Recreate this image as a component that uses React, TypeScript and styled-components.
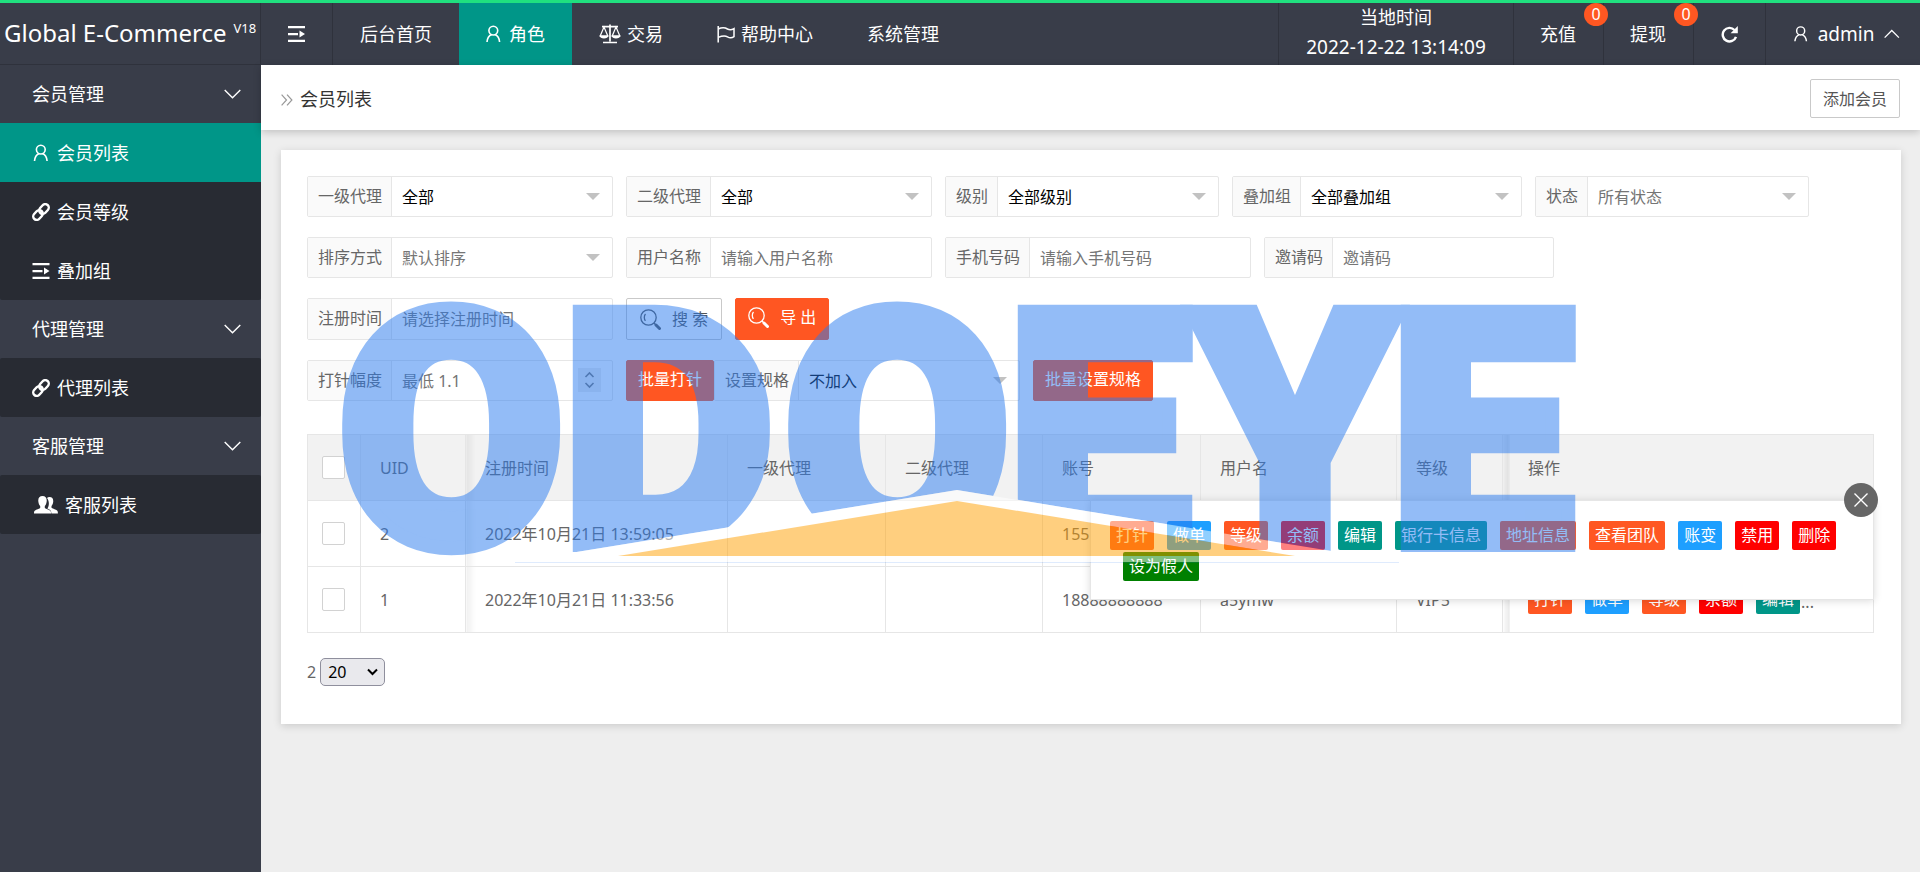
import React from 'react';
import styled, { createGlobalStyle, css } from 'styled-components';

const GlobalStyle = createGlobalStyle`
  *, *::before, *::after { box-sizing: border-box; }
  body {
    margin: 0;
    background: #eee;
    color: #666;
    font-family: "Noto Sans", "Noto Sans CJK SC", sans-serif;
    font-size: 16px;
    line-height: 24px;
  }
  button, input, select { font: inherit; color: inherit; margin: 0; }
  a { color: inherit; text-decoration: none; }
  ul { list-style: none; margin: 0; padding: 0; }
`;

const Page = styled.div`
  display: flex;
  flex-direction: column;
  min-height: 100vh;
`;

const Header = styled.header`
  display: flex;
  height: 65px;
  border-top: 3px solid #20e07f;
  background: #393d49;
  color: #fff;
  font-size: 18px;
`;

const Brand = styled.div`
  display: flex;
  flex: none;
  width: 261px;
  padding: 12px 0 0 4px;
  gap: 7px;
  border-right: 1px solid #2f323c;
  border-bottom: 1px solid #2f323c;
  font-size: 24px;
  line-height: 36px;
  white-space: nowrap;
  sup { font-size: 13px; line-height: 26px; vertical-align: top; }
`;

const IconButton = styled.button`
  display: flex;
  align-items: center;
  justify-content: center;
  width: 72px;
  padding: 0;
  border: 0;
  border-right: 1px solid #2f323c;
  background: none;
  color: #fff;
`;

const NavBar = styled.nav`
  display: flex;
  flex: 1;
`;

const NavLink = styled.a<{ $active?: boolean; $gap?: number }>`
  display: flex;
  align-items: center;
  gap: ${p => p.$gap ?? 8}px;
  padding: 0 27px;
  white-space: nowrap;
  background: ${p => (p.$active ? '#009688' : 'none')};
`;

const Clock = styled.div`
  width: 236px;
  border-left: 1px solid #2f323c;
  border-right: 1px solid #2f323c;
  text-align: center;
  line-height: 28px;
  time { display: block; font-size: 19px; line-height: 32px; }
`;

const MoneyLink = styled.a`
  position: relative;
  display: flex;
  align-items: center;
  padding: 0 27px 0 26px;
  border-right: 1px solid #2f323c;
`;

const Badge = styled.span`
  position: absolute;
  top: 0;
  right: -5px;
  z-index: 1;
  width: 24px;
  height: 23px;
  border-radius: 50%;
  background: #ff5722;
  font-size: 16px;
  line-height: 23px;
  text-align: center;
`;

const UserButton = styled.button`
  display: flex;
  align-items: center;
  gap: 10px;
  width: 154px;
  padding: 0 20px 0 28px;
  border: 0;
  background: none;
  color: #fff;
  font-size: 19px;
`;

const Body = styled.div`
  display: flex;
  flex: 1;
`;

const Sidebar = styled.aside`
  flex: none;
  width: 261px;
  background: #393d49;
  color: #fff;
  font-size: 18px;
`;

const GroupTitle = styled.button`
  display: flex;
  align-items: center;
  justify-content: space-between;
  width: 100%;
  height: 58px;
  padding: 0 20px 0 32px;
  border: 0;
  background: none;
  color: #fff;
`;

const SubMenu = styled.ul`
  border-radius: 2px;
  background: #282b33;
`;

const SubLink = styled.a<{ $active?: boolean }>`
  display: flex;
  align-items: center;
  gap: 7px;
  height: 59px;
  padding: 0 32px;
  background: ${p => (p.$active ? '#009688' : 'none')};
  svg { min-width: 18px; }
`;

const Main = styled.main`
  flex: 1;
  min-width: 0;
`;

const TitleBar = styled.div`
  display: flex;
  align-items: center;
  justify-content: space-between;
  height: 65px;
  padding: 2px 20px 0;
  background: #fff;
  box-shadow: 0 2px 8px rgba(0, 0, 0, 0.2);
`;

const Title = styled.h1`
  display: flex;
  align-items: center;
  gap: 7px;
  margin: 0;
  color: #333;
  font-size: 18px;
  font-weight: 400;
  svg { margin-top: 2px; }
`;

const Button = styled.button<{ $primary?: boolean; $pad?: number; $height?: number }>`
  display: flex;
  align-items: center;
  gap: 11px;
  height: ${p => p.$height ?? 41}px;
  padding: 0 ${p => p.$pad ?? 12}px;
  border: 1px solid #c9c9c9;
  border-radius: 2px;
  background: #fff;
  color: #555;
  white-space: nowrap;
  ${p => p.$primary && css`
    border-color: #ff5722;
    background: #ff5722;
    color: #fff;
    padding-bottom: 4px;
  `}
`;

const Card = styled.section`
  margin: 20px 19px 0 20px;
  padding: 26px 27px 38px 26px;
  background: #fff;
  box-shadow: 0 2px 8px rgba(0, 0, 0, 0.15);
`;

const Filters = styled.form`
  display: flex;
  flex-direction: column;
  gap: 20px;
  margin-bottom: 33px;
`;

const FilterRow = styled.div`
  display: flex;
  gap: 13px;
`;

const Pair = styled.div`
  display: flex;
`;

const Field = styled.label`
  display: flex;
  min-height: 41px;
  border: 1px solid #e6e6e6;
  border-radius: 2px;
  background: #fff;
`;

const FieldLabel = styled.span`
  padding: 0 9px 0 10px;
  border-right: 1px solid #e6e6e6;
  background: #fafafa;
  line-height: 39px;
  white-space: nowrap;
`;

const control = css`
  width: 220px;
  height: 39px;
  padding: 0 10px;
  border: 0;
  background: transparent;
  outline: none;
  appearance: none;
`;

const SelectBox = styled.span`
  position: relative;
  display: flex;
  > svg { position: absolute; right: 12px; top: 16px; pointer-events: none; }
`;

const Select = styled.select<{ $muted?: boolean }>`
  ${control}
  color: ${p => (p.$muted ? '#757575' : '#000')};
`;

const Input = styled.input`
  ${control}
  &::placeholder { color: #757575; opacity: 1; }
  &::-webkit-inner-spin-button { display: none; }
`;

const Spinner = styled.span`
  position: absolute;
  right: 11px;
  top: 7px;
  display: flex;
  align-items: center;
  justify-content: center;
  width: 23px;
  height: 24px;
  background: #ededed;
`;

const TableWrap = styled.div`
  position: relative;
`;

const Table = styled.table`
  width: 100%;
  table-layout: fixed;
  border-collapse: collapse;
  th, td {
    height: 66px;
    padding: 0 19px;
    border: 1px solid #e6e6e6;
    font-weight: 400;
    text-align: left;
    white-space: nowrap;
  }
  th { background: #f2f2f2; }
  th:first-child, td:first-child { padding: 0 14px; }
  th:nth-child(3), td:nth-child(3) {
    background-image: linear-gradient(to right, rgba(0, 0, 0, 0.06), transparent 9px);
  }
  th:last-child, td:last-child {
    padding-left: 25px;
    background-image:
      linear-gradient(to right, transparent 5px, #e2e2e2 5px, #e2e2e2 6px, transparent 6px),
      linear-gradient(to right, rgba(0, 0, 0, 0.02), rgba(0, 0, 0, 0.07) 5px, transparent 5px);
  }
`;

const CheckBox = styled.input`
  display: block;
  appearance: none;
  width: 23px;
  height: 23px;
  margin: 0;
  border: 1px solid #d2d2d2;
  border-radius: 2px;
  background: #fff;
`;

const Actions = styled.div`
  display: flex;
  align-items: flex-end;
  gap: 13px;
`;

const More = styled.span`
  margin-left: -12px;
`;

const ActionButton = styled.button<{ $color: string }>`
  height: 29px;
  padding: 0 6px;
  border: 0;
  border-radius: 2px;
  background: ${p => p.$color};
  color: #fff;
  line-height: 29px;
  white-space: nowrap;
`;

const Popup = styled.div`
  position: absolute;
  top: 66px;
  right: 0;
  width: 784px;
  height: 100px;
  padding: 20px 19px;
  border: 1px solid #e6e6e6;
  background: #fff;
  box-shadow: 0 1px 8px rgba(0, 0, 0, 0.15);
`;

const PopupActions = styled.div`
  display: flex;
  flex-wrap: wrap;
  gap: 2px 13px;
`;

const PopupSecondLine = styled.div`
  display: flex;
  width: 100%;
  padding-left: 13px;
`;

const CloseButton = styled.button`
  position: absolute;
  top: -18px;
  right: -5px;
  display: flex;
  align-items: center;
  justify-content: center;
  width: 34px;
  height: 34px;
  padding: 0;
  border: 0;
  border-radius: 50%;
  background: #666;
  color: #fff;
`;

const Pager = styled.label`
  display: flex;
  align-items: center;
  gap: 4px;
  margin-top: 25px;
`;

const PageSize = styled.span`
  position: relative;
  display: flex;
  select {
    appearance: none;
    width: 65px;
    height: 28px;
    padding: 0 7px;
    border: 1px solid #8f8f9d;
    border-radius: 5px;
    background: #e9e9ed;
    color: #000;
    line-height: 24px;
  }
  svg { position: absolute; right: 7px; top: 10px; pointer-events: none; }
`;

const Watermark = styled.svg`
  position: absolute;
  top: 290px;
  left: calc(50% - 620px);
  pointer-events: none;
`;

const UserIcon = () => (
  <svg width="15" height="18" viewBox="0 0 15 18" fill="none" stroke="currentColor" strokeWidth="1.6">
    <circle cx="7.3" cy="5.6" r="4.4" />
    <path d="M5.6 9.6C3 10.8 1.3 13.4 1 17M9 9.6c2.6 1.2 4.3 3.8 4.6 7.4" />
  </svg>
);

const ShrinkIcon = () => (
  <svg width="17" height="16" viewBox="0 0 17 16" fill="currentColor">
    <path d="M0 0h17v2.200H0zM0 7h10v2.200H0zM0 13.800h17V16H0zM11.500 4.600 17 8l-5.500 3.400z" />
  </svg>
);

const ScaleIcon = () => (
  <svg width="22" height="20" viewBox="0 0 22 20" fill="none" stroke="currentColor" strokeWidth="1.200">
    <path d="M3 2.700h16M11 0.500v17M4 18.500h14" strokeWidth="1.700" />
    <path d="M5 3 1.200 12h7.600zM17 3l-3.800 9h7.600z" />
    <path d="M0.500 11.500h9c-.3 4-8.700 4-9 0zM12.500 11.500h9c-.3 4-8.700 4-9 0z" fill="currentColor" stroke="none" />
  </svg>
);

const FlagIcon = () => (
  <svg width="18" height="17" viewBox="0 0 18 17" fill="none" stroke="currentColor" strokeWidth="1.500">
    <path d="M1.200 0v16.500M1.200 3c4-2 7-1.500 9.300 0 2 1 4 1 6.500-.4v8c-2.500 1.800-4.500 1.500-6.500.2-2-1.200-5-1.200-9.300.6" />
  </svg>
);

const RefreshIcon = () => (
  <svg width="17" height="17" viewBox="0 0 17 17" fill="none">
    <path d="M13.500 4A6.800 6.800 0 1 0 15 10.800" stroke="currentColor" strokeWidth="2.400" />
    <path d="M16.800 0v7.200H9.600z" fill="currentColor" />
  </svg>
);

const LinkIcon = () => (
  <svg width="18" height="18" viewBox="0 0 18 18" fill="none" stroke="currentColor" strokeWidth="2.400" strokeLinecap="round">
    <rect x="-5.400" y="-3.500" width="10.800" height="7" rx="3.500" transform="translate(12 6) rotate(-48)" />
    <rect x="-5.400" y="-3.500" width="10.800" height="7" rx="3.500" transform="translate(6 12) rotate(-48)" />
  </svg>
);

const FriendsIcon = () => (
  <svg width="26" height="18" viewBox="-2 0 26 18" fill="currentColor">
    <path d="M15.500 1c2.800 0 4 2 3.700 4.800-.2 2-.9 3.400-1.700 4.300v1.700c1 1 5.700 1.800 6.200 3.600.2.800.2 1.600.2 2.100h-6.500c0-3-1.600-3.900-4-5 1.800-2.500 2.200-7.200-.4-10.500.6-.7 1.400-1 2.500-1z" />
    <path d="M8.500 0c3 0 4.500 2.100 4.200 5.200-.2 2.200-1 3.900-1.900 4.900v1.800c1.200 1.200 5.500 1.800 6 3.700.2.800.2 1.500.2 2H0c0-.5 0-1.300.2-2 .5-1.900 4.800-2.500 6-3.700v-1.800C5.300 9.100 4.500 7.400 4.300 5.200 4 2.100 5.500 0 8.500 0z" />
  </svg>
);

const Chevron = ({ up }: { up?: boolean }) => (
  <svg width="17" height="10" viewBox="0 0 17 10" fill="none" stroke="currentColor" strokeWidth="1.400">
    <path d={up ? 'M.7 9l7.800-7.800L16.300 9' : 'M.7 1l7.800 7.800L16.300 1'} />
  </svg>
);

const DoubleArrow = () => (
  <svg width="12" height="12" viewBox="0 0 12 12" fill="none" stroke="#999" strokeWidth="1.200">
    <path d="M.6.6 5.500 6 .6 11.400M6 .6 10.900 6 6 11.400" />
  </svg>
);

const Triangle = () => (
  <svg width="14" height="7" viewBox="0 0 14 7" fill="#c2c2c2"><path d="M0 0h14L7 7z" /></svg>
);

const SearchIcon = () => (
  <svg width="21" height="21" viewBox="0 0 21 21" fill="none" stroke="currentColor" strokeWidth="1.300">
    <circle cx="8.500" cy="8.500" r="7.700" />
    <path d="M5.500 5c-1.600 1.800-1.600 5 0 6.800M14 14l2 2" />
    <path d="m16 16 3.500 3.500" strokeWidth="3" strokeLinecap="round" />
  </svg>
);

type SelectFieldProps = { label: string; value: string; muted?: boolean };
const SelectField = ({ label, value, muted }: SelectFieldProps) => (
  <Field>
    <FieldLabel>{label}</FieldLabel>
    <SelectBox>
      <Select $muted={muted}><option>{value}</option></Select>
      <Triangle />
    </SelectBox>
  </Field>
);

const InputField = ({ label, hint }: { label: string; hint: string }) => (
  <Field>
    <FieldLabel>{label}</FieldLabel>
    <Input placeholder={hint} />
  </Field>
);

const ORANGE = '#ff5722';
const BLUE = '#1e9fff';
const GREEN = '#009688';
const RED = '#f00';

const rowActions: [string, string][] = [
  ['打针', ORANGE], ['做单', BLUE], ['等级', ORANGE], ['余额', RED], ['编辑', GREEN],
];
const popupActions: [string, string][] = [
  ...rowActions, ['银行卡信息', GREEN], ['地址信息', ORANGE], ['查看团队', ORANGE],
  ['账变', BLUE], ['禁用', RED], ['删除', RED],
];

const columns = ['UID', '注册时间', '一级代理', '二级代理', '账号', '用户名', '等级', '操作'];
const widths = [53, 105, 262, 158, 157, 158, 196, 106];
const members = [
  ['2', '2022年10月21日 13:59:05', '', '', '155', '', ''],
  ['1', '2022年10月21日 11:33:56', '', '', '18888888888', 'a5ymw', 'VIP5'],
];

type MenuItem = { text: string; icon: React.ReactNode; active?: boolean };
const menu: { title: string; items: MenuItem[] }[] = [
  { title: '会员管理', items: [
    { text: '会员列表', icon: <UserIcon />, active: true },
    { text: '会员等级', icon: <LinkIcon /> },
    { text: '叠加组', icon: <ShrinkIcon /> },
  ] },
  { title: '代理管理', items: [{ text: '代理列表', icon: <LinkIcon /> }] },
  { title: '客服管理', items: [{ text: '客服列表', icon: <FriendsIcon /> }] },
];

const ActionList = ({ list }: { list: [string, string][] }) => (
  <>
    {list.map(([text, color]) => (
      <ActionButton type="button" key={text} $color={color}>{text}</ActionButton>
    ))}
  </>
);

export default function App() {
  return (
    <Page>
      <GlobalStyle />
      <Header>
        <Brand><span>Global E-Commerce</span><sup>V18</sup></Brand>
        <NavBar>
          <IconButton aria-label="收起菜单"><ShrinkIcon /></IconButton>
          <NavLink href="#home">后台首页</NavLink>
          <NavLink href="#role" $active><UserIcon />角色</NavLink>
          <NavLink href="#trade" $gap={6}><ScaleIcon />交易</NavLink>
          <NavLink href="#help" $gap={6}><FlagIcon />帮助中心</NavLink>
          <NavLink href="#system">系统管理</NavLink>
        </NavBar>
        <Clock>当地时间<time>2022-12-22 13:14:09</time></Clock>
        <MoneyLink href="#recharge">充值<Badge>0</Badge></MoneyLink>
        <MoneyLink href="#withdraw">提现<Badge>0</Badge></MoneyLink>
        <IconButton aria-label="刷新"><RefreshIcon /></IconButton>
        <UserButton><UserIcon />admin<Chevron up /></UserButton>
      </Header>
      <Body>
        <Sidebar>
          {menu.map(group => (
            <React.Fragment key={group.title}>
              <GroupTitle>{group.title}<Chevron /></GroupTitle>
              <SubMenu>
                {group.items.map(item => (
                  <li key={item.text}>
                    <SubLink href="#list" $active={item.active}>{item.icon}{item.text}</SubLink>
                  </li>
                ))}
              </SubMenu>
            </React.Fragment>
          ))}
        </Sidebar>
        <Main>
          <TitleBar>
            <Title><DoubleArrow />会员列表</Title>
            <Button $height={39}>添加会员</Button>
          </TitleBar>
          <Card>
            <Filters>
              <FilterRow>
                <SelectField label="一级代理" value="全部" />
                <SelectField label="二级代理" value="全部" />
                <SelectField label="级别" value="全部级别" />
                <SelectField label="叠加组" value="全部叠加组" />
                <SelectField label="状态" value="所有状态" muted />
              </FilterRow>
              <FilterRow>
                <SelectField label="排序方式" value="默认排序" muted />
                <InputField label="用户名称" hint="请输入用户名称" />
                <InputField label="手机号码" hint="请输入手机号码" />
                <InputField label="邀请码" hint="邀请码" />
              </FilterRow>
              <FilterRow>
                <InputField label="注册时间" hint="请选择注册时间" />
                <Button type="button" $pad={13} $height={42}><SearchIcon />搜 索</Button>
                <Button type="button" $primary $pad={12} $height={42}><SearchIcon />导 出</Button>
              </FilterRow>
              <FilterRow>
                <Field>
                  <FieldLabel>打针幅度</FieldLabel>
                  <SelectBox>
                    <Input type="number" placeholder="最低 1.1" />
                    <Spinner>
                      <svg width="11" height="18" viewBox="0 0 11 18" fill="none" stroke="#777" strokeWidth="1.600">
                        <path d="M1.500 6 5.500 2l4 4M1.500 12l4 4 4-4" />
                      </svg>
                    </Spinner>
                  </SelectBox>
                </Field>
                <Pair>
                  <Button type="button" $primary $pad={11}>批量打针</Button>
                  <SelectField label="设置规格" value="不加入" />
                </Pair>
                <Button type="button" $primary $pad={11}>批量设置规格</Button>
              </FilterRow>
            </Filters>
            <TableWrap>
              <Table>
                <colgroup>
                  {widths.map((w, i) => <col key={i} style={{ width: w }} />)}
                  <col />
                </colgroup>
                <thead>
                  <tr>
                    <th><CheckBox type="checkbox" aria-label="全选" /></th>
                    {columns.map(c => <th key={c}>{c}</th>)}
                  </tr>
                </thead>
                <tbody>
                  {members.map(m => (
                    <tr key={m[0]}>
                      <td><CheckBox type="checkbox" aria-label={m[0]} /></td>
                      {m.map((v, i) => <td key={i}>{v}</td>)}
                      <td><Actions><ActionList list={rowActions} /><More>...</More></Actions></td>
                    </tr>
                  ))}
                </tbody>
              </Table>
              <Popup>
                <PopupActions>
                  <ActionList list={popupActions} />
                  <PopupSecondLine>
                    <ActionButton type="button" $color="#008000">设为假人</ActionButton>
                  </PopupSecondLine>
                </PopupActions>
                <CloseButton aria-label="关闭">
                  <svg width="14" height="14" viewBox="0 0 14 14" stroke="currentColor" strokeWidth="1.400">
                    <path d="M.5.5l13 13M13.500.5l-13 13" />
                  </svg>
                </CloseButton>
              </Popup>
            </TableWrap>
            <Pager>
              2
              <PageSize>
                <select aria-label="每页条数"><option>20</option></select>
                <svg width="11" height="8" viewBox="0 0 11 8" fill="none" stroke="#000" strokeWidth="2">
                  <path d="M1 1.500 5.500 6 10 1.500" />
                </svg>
              </PageSize>
            </Pager>
          </Card>
        </Main>
      </Body>
      <Watermark width="1240" height="280" viewBox="340 290 1240 280">
        <defs>
          <clipPath id="above-roof">
            <path d="M340 290h1240v280h-181v-8L957 490 515 562v8H340z" />
          </clipPath>
        </defs>
        <g clipPath="url(#above-roof)" opacity="0.5">
          <text
            x="338 562 784 1007 1192 1390"
            y="545"
            fontFamily="Roboto, sans-serif"
            fontWeight="900"
            fontSize="328"
            fill="#297bef"
            stroke="#297bef"
            strokeWidth="14"
          >ODOEYE</text>
        </g>
        <path d="M515 562 957 490l442 72zM618 556h677L957 501z" fill="#fff" fillOpacity="0.5" fillRule="evenodd" />
        <path d="M618 556h677L957 501z" fill="#ff9f00" fillOpacity="0.5" />
        <path d="M515 562.500h884" stroke="#297bef" strokeOpacity="0.150" />
      </Watermark>
    </Page>
  );
}
